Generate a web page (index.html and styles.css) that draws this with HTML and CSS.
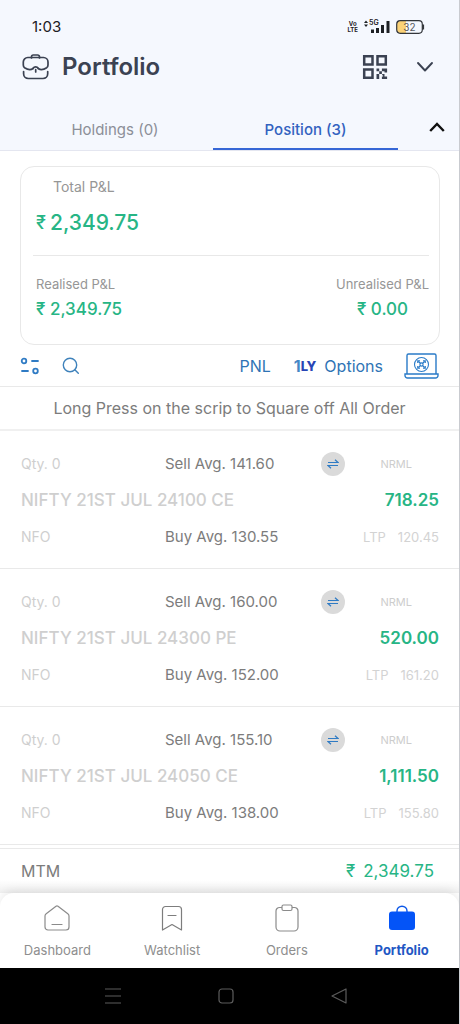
FILE: index.html
```html
<!DOCTYPE html>
<html lang="en">
<head>
<meta charset="utf-8">
<meta name="viewport" content="width=device-width, initial-scale=1">
<title>Portfolio</title>
<link rel="stylesheet" href="styles.css">
</head>
<body>
<div class="app">
  <header class="top">
    <div class="status">
      <span class="clock">1:03</span>
      <div class="status-icons">
        <span class="volte"><span>Vo</span><span>LTE</span></span>
        <span class="signal">
          <svg width="26" height="16" viewBox="0 0 26 16" fill="#1d2024" aria-hidden="true"><path d="M0 4l2-2.500L4 4zM0 5.500h4L2 8z"/><path d="M7 10.500h3V14H7zM12 9h3v5h-3zM17 6h3v8h-3zM22.500 2h3v12h-3z"/></svg>
          <span class="net">5G</span>
        </span>
        <span class="battery">
          <svg width="29" height="14" viewBox="0 0 29 14" aria-hidden="true"><path d="M4 1h6v12H4a3 3 0 0 1-3-3V4a3 3 0 0 1 3-3z" fill="#fbd277"/><rect x=".7" y=".7" width="25.600" height="12.600" rx="3.500" fill="none" stroke="#33363b" stroke-width="1.200"/><path d="M27.200 4.500v5" stroke="#33363b" stroke-width="1.800"/></svg>
          <span class="charge">32</span>
        </span>
      </div>
    </div>
    <div class="title-bar">
      <svg width="28" height="28" viewBox="0 0 28 28" fill="none" stroke="#3b4252" stroke-width="1.700" stroke-linecap="round" stroke-linejoin="round" aria-hidden="true"><path d="M9.500 5V3.800A1.800 1.800 0 0 1 11.300 2h4.400a1.800 1.800 0 0 1 1.800 1.800V5"/><path d="M11 15.500c-3 2.200-6 .8-8.400-.8C1.600 14 1.300 13 1.300 12V9a4.500 4.500 0 0 1 4.500-4.500h15.700A4.500 4.500 0 0 1 26 9v3c0 1-.4 2-1.300 2.700-2.400 1.600-5.400 3-8.400.8"/><path d="M11 15.500c1.300-2.200 4-2.200 5.300 0M13.700 16.700v2.300"/><path d="M1.600 18.500v2.300a4.700 4.700 0 0 0 4.700 4.700H21a4.700 4.700 0 0 0 4.700-4.700v-2.300"/></svg>
      <h1>Portfolio</h1>
      <button class="icon-btn" type="button" aria-label="Scan QR code">
        <svg width="26" height="26" viewBox="0 0 26 26" aria-hidden="true"><g fill="none" stroke="#3b4252" stroke-width="2.500"><path d="M2.200 2.200h8.300v8.300H2.200zM15.500 2.200h8.300v8.300h-8.300zM2.200 15.500h8.300v8.300H2.200z"/></g><path fill="#3b4252" d="M14.500 14.500h2.700v2.700h2.700v2.700h-2.700v2.700h-2.700v-2.700h2.700v-2.700h-2.700zM19.900 14.500h5.200v4h-2.600v-1.300h-2.600zM19.900 19.900h2.600v2.600h2.600v2.600h-5.200v-2.600h1.300zM14.500 22.500h2.700v2.600h-2.700z"/></svg>
      </button>
      <button class="icon-btn" type="button" aria-label="Select account">
        <svg width="18" height="12" viewBox="0 0 18 12" fill="none" stroke="#3b4252" stroke-width="1.900" stroke-linecap="round" stroke-linejoin="round" aria-hidden="true"><path d="M2 2l7 7.500L16 2"/></svg>
      </button>
    </div>
    <div class="tabs">
      <button class="tab" type="button">Holdings (0)</button>
      <button class="tab active" type="button" aria-current="true">Position (3)</button>
      <button class="collapse" type="button" aria-label="Collapse summary">
        <svg width="16" height="12" viewBox="0 0 16 12" fill="none" stroke="#111" stroke-width="2.400" aria-hidden="true"><path d="M1.200 10L8 3l6.800 7"/></svg>
      </button>
    </div>
  </header>

  <main class="content">
    <section class="summary" aria-label="Profit and loss">
      <div class="total">
        <p class="label">Total P&amp;L</p>
        <p class="big">₹<span>2,349.75</span></p>
      </div>
      <div class="split">
        <div class="part"><p class="label">Realised P&amp;L</p><p class="value">₹ 2,349.75</p></div>
        <div class="part center"><p class="label">Unrealised P&amp;L</p><p class="value">₹ 0.00</p></div>
      </div>
    </section>

    <div class="tools">
      <button class="icon-btn" type="button" aria-label="Filter">
        <svg width="20" height="18" viewBox="0 0 20 18" fill="none" stroke="#2f7bc4" stroke-width="1.800" stroke-linecap="round" aria-hidden="true"><circle cx="4" cy="4" r="2.300"/><path d="M12 4h6M2 14h6"/><circle cx="15.500" cy="14" r="2.300"/></svg>
      </button>
      <button class="icon-btn search" type="button" aria-label="Search">
        <svg width="18" height="18" viewBox="0 0 18 18" fill="none" stroke="#3f82bb" stroke-width="1.400" stroke-linecap="round" aria-hidden="true"><circle cx="8" cy="8" r="6.700"/><path d="M12.800 12.800l3.500 3.500"/></svg>
      </button>
      <button class="text-btn pnl" type="button">PNL</button>
      <button class="text-btn options" type="button"><span class="logo"><b>1</b>LY</span>Options</button>
      <button class="icon-btn" type="button" aria-label="Web terminal">
        <svg width="35" height="28" viewBox="0 0 35 28" fill="none" stroke="#2a7bc8" stroke-width="1.400" aria-hidden="true"><path d="M3 21.500V3.500a1.500 1.500 0 0 1 1.500-1.500h26A1.500 1.500 0 0 1 32 3.500v18M1 22h33v1.500a2.500 2.500 0 0 1-2.500 2.500h-28A2.500 2.500 0 0 1 1 23.500z"/><g stroke-width="1.100"><circle cx="17.500" cy="12.500" r="7"/><path d="M13.700 11V8.700H16M19 8.700h2.300V11M21.300 14v2.300H19M16 16.300h-2.300V14M14.500 9.500l6 6M20.500 9.500l-6 6"/><circle cx="17.500" cy="12.500" r="1.600" fill="#fff"/></g></svg>
      </button>
    </div>

    <p class="hint">Long Press on the scrip to Square off All Order</p>

    <ul class="positions">
      <li class="position">
        <div class="line"><span class="dim">Qty. 0</span><span class="avg">Sell Avg. 141.60</span>
          <span class="product"><button class="swap" type="button" aria-label="Convert position"><svg width="12" height="10" viewBox="0 0 12 10" fill="none" stroke="#2f7bc4" stroke-width="1.200" aria-hidden="true"><path d="M1 3.500h10L8 .8M11 6.500H1l3 2.700"/></svg></button><small>NRML</small></span></div>
        <div class="line main"><strong class="name">NIFTY 21ST JUL 24100 CE</strong><strong class="gain">718.25</strong></div>
        <div class="line"><span class="dim">NFO</span><span class="avg">Buy Avg. 130.55</span><span class="ltp"><span>LTP</span><span>120.45</span></span></div>
      </li>
      <li class="position">
        <div class="line"><span class="dim">Qty. 0</span><span class="avg">Sell Avg. 160.00</span>
          <span class="product"><button class="swap" type="button" aria-label="Convert position"><svg width="12" height="10" viewBox="0 0 12 10" fill="none" stroke="#2f7bc4" stroke-width="1.200" aria-hidden="true"><path d="M1 3.500h10L8 .8M11 6.500H1l3 2.700"/></svg></button><small>NRML</small></span></div>
        <div class="line main"><strong class="name">NIFTY 21ST JUL 24300 PE</strong><strong class="gain">520.00</strong></div>
        <div class="line"><span class="dim">NFO</span><span class="avg">Buy Avg. 152.00</span><span class="ltp"><span>LTP</span><span>161.20</span></span></div>
      </li>
      <li class="position">
        <div class="line"><span class="dim">Qty. 0</span><span class="avg">Sell Avg. 155.10</span>
          <span class="product"><button class="swap" type="button" aria-label="Convert position"><svg width="12" height="10" viewBox="0 0 12 10" fill="none" stroke="#2f7bc4" stroke-width="1.200" aria-hidden="true"><path d="M1 3.500h10L8 .8M11 6.500H1l3 2.700"/></svg></button><small>NRML</small></span></div>
        <div class="line main"><strong class="name">NIFTY 21ST JUL 24050 CE</strong><strong class="gain">1,111.50</strong></div>
        <div class="line"><span class="dim">NFO</span><span class="avg">Buy Avg. 138.00</span><span class="ltp"><span>LTP</span><span>155.80</span></span></div>
      </li>
    </ul>
  </main>

  <footer class="bottom">
    <div class="mtm"><span>MTM</span><span class="mtm-value"><span>₹</span><span>2,349.75</span></span></div>
    <nav class="nav" aria-label="Main">
      <a href="#dashboard"><svg width="28" height="28" viewBox="0 0 28 28" fill="none" stroke="#8b8b8b" stroke-width="1.200" stroke-linecap="round" stroke-linejoin="round" aria-hidden="true"><path d="M2 12c0-1 .4-1.700 1.200-2.300L13 2.300c.7-.5 1.300-.5 2 0l9.800 7.400c.8.600 1.200 1.300 1.200 2.300v11a3 3 0 0 1-3 3H5a3 3 0 0 1-3-3zM9 20.500h10"/></svg>Dashboard</a>
      <a href="#watchlist"><svg width="28" height="28" viewBox="0 0 28 28" fill="none" stroke="#7d7d7d" stroke-width="1.200" stroke-linecap="round" stroke-linejoin="round" aria-hidden="true"><path d="M4.500 26V5.500a3 3 0 0 1 3-3h13a3 3 0 0 1 3 3V26L14 20.500zM10 11.500h8"/></svg>Watchlist</a>
      <a href="#orders"><svg width="28" height="28" viewBox="0 0 28 28" fill="none" stroke="#8b8b8b" stroke-width="1.200" stroke-linejoin="round" aria-hidden="true"><path d="M9 3.500H6.500A3.500 3.500 0 0 0 3 7v16a4 4 0 0 0 4 4h14a4 4 0 0 0 4-4V7a3.500 3.500 0 0 0-3.500-3.500H19"/><rect x="9" y="1" width="10" height="5.500" rx="1.500"/></svg>Orders</a>
      <a class="active" href="#portfolio" aria-current="page"><svg width="28" height="28" viewBox="0 0 28 28" aria-hidden="true"><path d="M9 8V7a5 4.800 0 0 1 10 0v1" fill="none" stroke="#0b57e8" stroke-width="1.400"/><rect x="1" y="7.500" width="26" height="18.500" rx="3" fill="#0454f7"/></svg>Portfolio</a>
    </nav>
    <div class="system">
      <button type="button" aria-label="Recent apps"><svg width="18" height="18" viewBox="0 0 18 18" stroke="#5c5c5c" stroke-width="1.200" aria-hidden="true"><path d="M1 2h16M1 9h16M1 16h16"/></svg></button>
      <button type="button" aria-label="Home"><svg width="18" height="18" viewBox="0 0 18 18" fill="none" stroke="#5c5c5c" stroke-width="1.200" aria-hidden="true"><rect x="2" y="2" width="14" height="14" rx="3"/></svg></button>
      <button type="button" aria-label="Back"><svg width="18" height="18" viewBox="0 0 18 18" fill="none" stroke="#5c5c5c" stroke-width="1.200" stroke-linejoin="round" aria-hidden="true"><path d="M16 2v14L2 9z"/></svg></button>
    </div>
  </footer>
</div>
</body>
</html>
```
FILE: styles.css
```css
* { box-sizing: border-box; }
body, h1, p, ul { margin: 0; padding: 0; }
body {
  font-family: Inter, "Liberation Sans", sans-serif;
  font-size: 15px;
  line-height: 24px;
  color: #7c7c7c;
  background: #fff;
}
button {
  font: inherit;
  color: inherit;
  background: none;
  border: 0;
  padding: 0;
}
svg { display: block; }
.app {
  min-height: 100vh;
  display: flex;
  flex-direction: column;
  border-right: 1px solid #c9cbd0;
}

.top { background: #f5f8fe; border-bottom: 1px solid #e4e6f0; }
.status {
  display: flex;
  justify-content: space-between;
  align-items: center;
  padding: 15px 34px 0 32px;
}
.clock { font-size: 15px; color: #1d2024; }
.status-icons { display: flex; align-items: center; gap: 6px; color: #1d2024; }
.volte { display: grid; font-size: 6px; line-height: 6px; font-weight: 700; }
.volte span { display: block; text-align: center; }
.signal, .battery { position: relative; }
.net { position: absolute; left: 5px; top: 0; font-size: 7px; line-height: 8px; font-weight: 600; }
.charge { position: absolute; inset: 0 2px 0 0; text-align: center; font-size: 10px; line-height: 14px; color: #55585d; }

.title-bar {
  display: flex;
  align-items: center;
  padding: 12px 25px 12px 22px;
  gap: 12px;
}
.title-bar h1 { flex: 1; font-size: 24px; line-height: 32px; font-weight: 600; color: #3b4252; }
.title-bar .icon-btn + .icon-btn { margin-left: 16px; }

.tabs { display: grid; grid-template-columns: 196fr 185fr 61px; padding-left: 17px; }
.tab { height: 55px; padding-top: 16px; color: #8c8f98; border-bottom: 2px solid transparent; }
.tab.active { color: #3362c0; font-weight: 500; border-bottom-color: #3667d6; }
.collapse { display: grid; place-items: center; padding: 8px 0 0 16px; }

.content { flex: 1; }
.summary {
  margin: 15px 19px 0 20px;
  padding: 8px 10px 22px 12px;
  border: 1px solid #e8e8e8;
  border-radius: 14px;
}
.label { font-size: 13px; color: #969696; }
.total { border-bottom: 1px solid #e8e8e8; padding: 0 3px 16px; }
.total .label { padding: 0 17px; font-size: 14px; }
.big { display: flex; align-items: center; gap: 4px; padding-top: 8px; font-size: 18px; line-height: 32px; font-weight: 500; color: #27b585; }
.big span { font-size: 21px; }
.split { display: flex; justify-content: space-between; padding: 16px 0 0 3px; }
.value { font-size: 17px; font-weight: 500; line-height: 26px; color: #27b585; }
.center { text-align: center; }

.tools { display: flex; align-items: center; height: 42px; padding: 0 20px; border-bottom: 1px solid #e9e9e9; color: #2f74b5; font-size: 16px; }
.search { margin-left: 22px; }
.pnl { margin-left: auto; }
.options { display: flex; align-items: center; gap: 8px; margin: 0 21px 0 23px; }
.logo { display: flex; align-items: center; font-size: 13px; font-weight: 800; color: #2845b5; }
.logo b { font-size: 16px; font-weight: 700; color: #4587c5; }
.hint { padding: 9px 20px; font-size: 16px; text-align: center; border-bottom: 2px solid #f0f0f0; }

.positions { list-style: none; }
.position { display: grid; gap: 12px; padding: 21px 20px 19px 21px; border-bottom: 1px solid #e9e9e9; }
.line { display: grid; grid-template-columns: 144px 1fr 118px; align-items: center; }
.line.main { grid-template-columns: 1fr auto; line-height: 25px; font-size: 17px; }
.dim { font-size: 14px; color: #cfcfcf; }
.name { font-weight: 500; color: #cfcfcf; }
.gain { font-weight: 600; color: #27b585; }
.product { display: flex; justify-content: space-between; align-items: center; padding-right: 27px; color: #cdcdcd; }
.product small { font-size: 11px; }
.swap { display: grid; place-items: center; width: 24px; height: 24px; border-radius: 50%; background: #dadada; }
.ltp { display: flex; justify-content: flex-end; gap: 12px; font-size: 13px; color: #d3d3d3; }

.bottom { background: #fff; }
.mtm {
  display: flex;
  justify-content: space-between;
  align-items: center;
  padding: 10px 25px 10px 21px;
  border-top: 1px solid #e9e9e9;
  font-size: 16px;
  background: linear-gradient(#fff 70%, #f0f0f0);
}
.mtm-value { display: flex; gap: 8px; font-size: 17px; color: #27b585; }
.nav {
  display: grid;
  grid-template-columns: repeat(4, 1fr);
  background: #fff;
  border-radius: 14px 14px 0 0;
  box-shadow: 0 -3px 8px #00000014;
}
.nav a {
  display: grid;
  justify-items: center;
  gap: 8px;
  padding: 11px 0 8px;
  font-size: 13px;
  line-height: 20px;
  color: #8e8e8e;
  text-decoration: none;
}
.nav .active { color: #1f57c4; font-weight: 700; }
.system { display: flex; justify-content: center; gap: 95px; padding: 19px 8px 19px 0; background: #000; }
```
